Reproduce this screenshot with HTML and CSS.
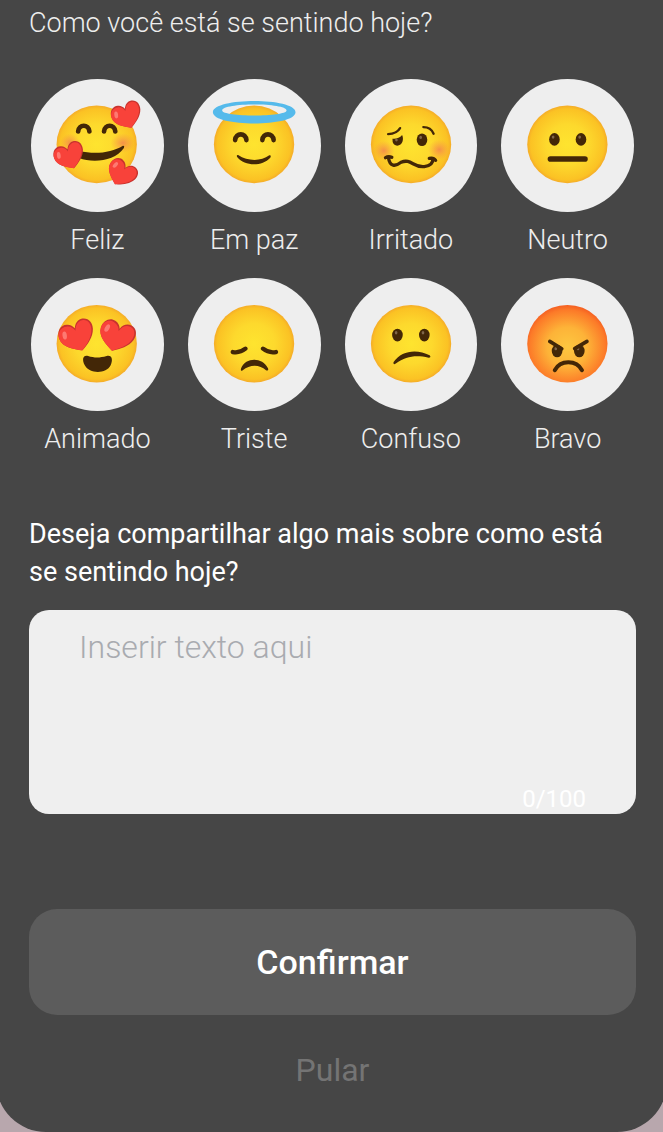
FILE: index.html
```html
<!DOCTYPE html>
<html lang="pt-BR">
<head>
<meta charset="utf-8">
<meta name="viewport" content="width=device-width, initial-scale=1">
<title>Como você está se sentindo hoje?</title>
<link rel="stylesheet" href="styles.css">
</head>
<body>
<svg class="defs" aria-hidden="true">
  <defs>
    <radialGradient id="yellow" cx=".5" cy=".5" r=".52">
      <stop offset="0" stop-color="#fee42f"/><stop offset=".5" stop-color="#fdd92d"/><stop offset=".88" stop-color="#fbc224"/><stop offset="1" stop-color="#f2a22a"/>
    </radialGradient>
    <radialGradient id="red" cx=".5" cy=".54" r=".56">
      <stop offset="0" stop-color="#fdc740"/><stop offset=".45" stop-color="#fdb338"/><stop offset=".85" stop-color="#fc7a28"/><stop offset="1" stop-color="#f2551f"/>
    </radialGradient>
    <radialGradient id="blush">
      <stop offset="0" stop-color="#f4864e" stop-opacity=".85"/><stop offset="1" stop-color="#f79a45" stop-opacity="0"/>
    </radialGradient>
    <g id="heart">
      <path fill="#c8332e" d="M1 43C-20 31-48 17-48-9C-48-31-31-43-16-38C-7-36-1-29 2-21C7-33 17-41 30-39C47-36 53-19 48-3C41 18 21 32 1 43Z"/>
      <path fill="#f8423a" d="M0 43C-20 31-48 17-48-8C-48-27-32-37-18-33C-8-31-1-23 1-14C6-27 15-36 28-35C43-33 48-18 44-4C38 16 19 31 0 43Z"/>
      <ellipse cx="-31" cy="-12" rx="6" ry="11" fill="#ff8d86" opacity=".75" transform="rotate(12 -31 -12)"/>
    </g>
    <g id="eye">
      <ellipse rx="16" ry="19" fill="#432707"/>
      <ellipse cx="-4" cy="-7" rx="4" ry="5" fill="#80664a"/>
    </g>
    <path id="smile-eye" d="M-17 8C-15-15 15-15 17 8" fill="none" stroke="#432707" stroke-width="14" stroke-linecap="round"/>
  </defs>
</svg>
<main class="sheet">
  <h1 class="title" id="mood-title">Como você está se sentindo hoje?</h1>
  <div class="moods" role="group" aria-labelledby="mood-title">
    <button class="mood" type="button">
      <svg class="face" viewBox="35 26 400 400" aria-hidden="true">
        <ellipse cx="233" cy="223" rx="121" ry="117" fill="url(#yellow)"/>
        <ellipse cx="312" cy="219" rx="38" ry="30" fill="url(#blush)"/>
        <ellipse cx="153" cy="218" rx="30" ry="28" fill="url(#blush)"/>
        <use href="#smile-eye" x="194" y="176"/><use href="#smile-eye" x="272" y="176"/>
        <path fill="#432707" d="M180 242C224 254 277 249 312 227Q318 226 315 234C288 274 221 280 180 264Z"/>
        <use href="#heart" transform="translate(323 135) rotate(-20) scale(.94)"/>
        <use href="#heart" transform="translate(150 257) rotate(-20) scale(.94)"/>
        <use href="#heart" transform="translate(308 309) rotate(31) scale(.92)"/>
      </svg>
      <span class="name">Feliz</span>
    </button>
    <button class="mood" type="button">
      <svg class="face" viewBox="36 26 400 400" aria-hidden="true">
        <ellipse cx="235" cy="223" rx="121" ry="117" fill="url(#yellow)"/>
        <path fill="#55baeb" fill-rule="evenodd" d="M111 126C111 81 360 81 360 126C360 171 111 171 111 126ZM139 121C139 141 333 141 333 121C333 97 139 97 139 121Z"/>
        <use href="#smile-eye" x="195" y="202"/><use href="#smile-eye" x="277" y="202"/>
        <path fill="#432707" d="M187 255C216 274 255 275 281 256Q288 255 284 263C258 291 207 289 184 261Q181 254 187 255Z"/>
      </svg>
      <span class="name">Em paz</span>
    </button>
    <button class="mood" type="button">
      <svg class="face" viewBox="36 26 400 400" aria-hidden="true">
        <ellipse cx="235" cy="223" rx="121" ry="117" fill="url(#yellow)"/>
        <ellipse cx="153" cy="242" rx="32" ry="30" fill="url(#blush)"/><ellipse cx="320" cy="239" rx="34" ry="31" fill="url(#blush)"/>
        <g fill="none" stroke="#432707" stroke-linecap="round">
          <path stroke-width="7" d="M166 192Q192 191 202 174M272 171Q295 171 303 191"/>
          <path stroke-width="10" d="M158 263Q167 258 177 262M167 263C171 291 188 290 205 277C235 264 242 294 275 290Q302 286 301 265M290 265Q303 262 309 271"/>
        </g>
        <path fill="#432707" d="M179 206Q197 208 208 195C214 207 210 227 193 227Q178 225 179 206Z"/><circle cx="191" cy="210" r="4" fill="#80664a"/>
        <use href="#eye" x="268" y="209"/>
      </svg>
      <span class="name">Irritado</span>
    </button>
    <button class="mood" type="button">
      <svg class="face" viewBox="37 26 400 400" aria-hidden="true">
        <ellipse cx="237" cy="223" rx="121" ry="117" fill="url(#yellow)"/>
        <use href="#eye" x="198" y="208"/><use href="#eye" x="278" y="208"/>
        <path d="M186 267H290" stroke="#432707" stroke-width="17" stroke-linecap="round"/>
      </svg>
      <span class="name">Neutro</span>
    </button>
    <button class="mood" type="button">
      <svg class="face" viewBox="35 22 400 400" aria-hidden="true">
        <ellipse cx="233" cy="220" rx="121" ry="117" fill="url(#yellow)"/>
        <use href="#heart" transform="translate(173 196) rotate(-20) scale(1.1)"/>
        <use href="#heart" transform="translate(293 196) rotate(18) scale(1.1)"/>
        <path fill="#432707" d="M207 257C226 263 242 263 263 257C280 253 282 270 275 285C262 312 211 312 197 285C188 268 191 253 207 257Z"/>
      </svg>
      <span class="name">Animado</span>
    </button>
    <button class="mood" type="button">
      <svg class="face" viewBox="36 22 400 400" aria-hidden="true">
        <ellipse cx="235" cy="220" rx="121" ry="117" fill="url(#yellow)"/>
        <path d="M171 245Q192 249 209 235M262 235Q279 249 301 245" fill="none" stroke="#432707" stroke-width="13" stroke-linecap="round"/>
        <path fill="#432707" d="M196 294C210 260 260 260 277 294Q280 303 271 300C251 281 222 282 201 300Q193 305 196 294Z"/>
      </svg>
      <span class="name">Triste</span>
    </button>
    <button class="mood" type="button">
      <svg class="face" viewBox="36 22 400 400" aria-hidden="true">
        <ellipse cx="235" cy="220" rx="121" ry="117" fill="url(#yellow)"/>
        <use href="#eye" x="194" y="194"/><use href="#eye" x="275" y="194"/>
        <path fill="#432707" d="M182 276C207 239 254 236 291 255Q297 262 288 262C248 253 220 258 189 280Q181 285 182 276Z"/>
      </svg>
      <span class="name">Confuso</span>
    </button>
    <button class="mood" type="button">
      <svg class="face" viewBox="37 22 400 400" aria-hidden="true">
        <ellipse cx="237" cy="220" rx="121" ry="117" fill="url(#red)"/>
        <use href="#eye" x="206" y="242"/><use href="#eye" x="273" y="242"/>
        <path d="M184 213L220 235M296 213L259 235" stroke="#432707" stroke-width="11" stroke-linecap="round"/>
        <path d="M199 300C216 268 264 268 281 300" fill="none" stroke="#432707" stroke-width="12" stroke-linecap="round"/>
      </svg>
      <span class="name">Bravo</span>
    </button>
  </div>
  <label class="question" for="note">Deseja compartilhar algo mais sobre como está se sentindo hoje?</label>
  <div class="note">
    <textarea class="input" id="note" maxlength="100" placeholder="Inserir texto aqui"></textarea>
    <span class="counter">0/100</span>
  </div>
  <button class="confirm" type="button">Confirmar</button>
  <button class="skip" type="button">Pular</button>
</main>
</body>
</html>
```
FILE: styles.css
```css
* {
  box-sizing: border-box;
}

body {
  margin: 0;
  overflow-x: hidden;
  background: #b8a7ad;
  color: #fff;
  font-family: Roboto, "Noto Sans", sans-serif;
}

button {
  padding: 0;
  border: 0;
  background: none;
  color: inherit;
  font: inherit;
  cursor: pointer;
}

.defs {
  position: absolute;
  width: 0;
  height: 0;
}

.sheet {
  display: flex;
  flex-direction: column;
  margin: 0 -4px;
  padding: 4px 31px 42px 33px;
  border-radius: 0 0 50px 50px;
  background: #464646;
}

.title {
  margin: 0;
  font-size: 27px;
  font-weight: 300;
  line-height: 38px;
  color: #eee;
}

.moods {
  display: grid;
  grid-template-columns: repeat(4, 1fr);
  gap: 20px 24px;
  margin-top: 37px;
  padding: 0 2px;
}

.mood {
  display: flex;
  flex-direction: column;
  gap: 10px;
}

.face {
  display: block;
  width: 100%;
  aspect-ratio: 1;
  border-radius: 50%;
  background: #eee;
}

.name {
  width: 100%;
  font-size: 27px;
  font-weight: 300;
  line-height: 36px;
  text-align: center;
  color: #eee;
}

.question {
  margin-top: 58px;
  padding-right: 10px;
  font-size: 27px;
  line-height: 38px;
}

.note {
  display: flex;
  flex-direction: column;
  margin-top: 19px;
  border-radius: 20px;
  background: #efefef;
}

.input {
  height: 174px;
  padding: 18px 50px 0;
  border: 0;
  outline: 0;
  resize: none;
  background: none;
  color: #464646;
  font: 300 32px/38px Roboto, "Noto Sans", sans-serif;
}

.input::placeholder {
  color: #a9abb0;
  opacity: 1;
}

.counter {
  padding-right: 50px;
  font-size: 24px;
  line-height: 30px;
  text-align: right;
}

.confirm {
  margin-top: 95px;
  padding: 33px;
  border-radius: 28px;
  background: #5c5c5c;
  font-size: 34px;
  font-weight: 500;
  line-height: 40px;
}

.skip {
  align-self: center;
  margin-top: 35px;
  font-size: 32px;
  line-height: 40px;
  color: #747474;
}
```
